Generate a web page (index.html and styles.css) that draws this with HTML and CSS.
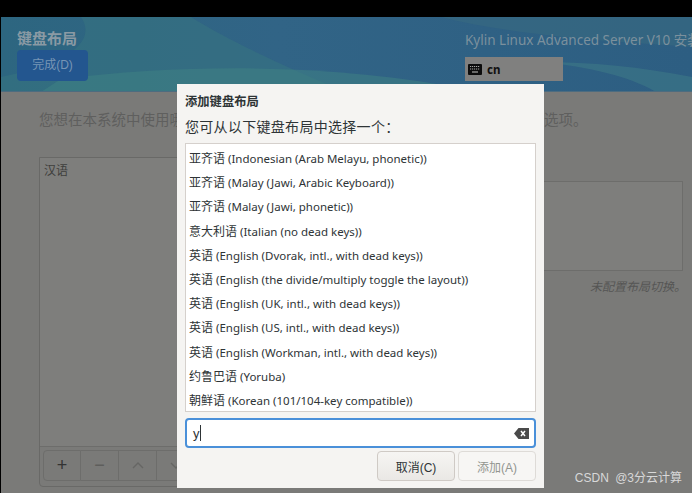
FILE: index.html
```html
<!DOCTYPE html>
<html>
  <head>
    <meta charset="utf-8">
    <link rel="stylesheet" href="styles.css">
  </head>
  <body>
    <div class="screen">
      <div class="topbar">
        <svg class="waves" width="691" height="75" viewBox="0 0 691 75" preserveAspectRatio="none">
          <defs>
            <linearGradient id="sky" x1="0" y1="0" x2="1" y2="0">
              <stop offset="0" stop-color="#2d6680"/>
              <stop offset=".4" stop-color="#316486"/>
              <stop offset="1" stop-color="#2d5e82"/>
            </linearGradient>
          </defs>
          <rect width="691" height="75" fill="url(#sky)"/>
          <path d="M80 0H190C230 25 285 50 345 75H0V60C50 50 100 30 80 0z" fill="#37757f" opacity=".5"/>
          <path d="M60 62C190 46 340 46 480 75H40z" fill="#3f8383" opacity=".5"/>
          <path d="M440 0H691V30C620 25 520 20 440 0z" fill="#3a6b80" opacity=".5"/>
          <path d="M540 45C590 50 630 60 655 75H691V60C640 50 590 45 540 45z" fill="#3f7d88" opacity=".5"/>
        </svg>
        <div class="topleft">
          <h1>键盘布局</h1>
          <span class="done">完成(D)</span>
        </div>
        <div class="topright">
          <div class="product">Kylin Linux Advanced Server V10 安装</div>
          <div class="layout-box">
            <svg class="kbd" width="14" height="11" viewBox="0 0 14 11"><rect width="14" height="11" rx="1" fill="#0c0c0c"/><path d="M2 2.5h10M2 5h10" stroke="#a8a8a6" stroke-width="1.2" stroke-dasharray="1.2 .8"/><path d="M4 8h6" stroke="#a8a8a6" stroke-width="1.2"/></svg>
            <b>cn</b>
          </div>
        </div>
      </div>
      <div class="content">
        <div class="question">
          <span class="q-start">您想在本系统中使用哪</span>
          <span class="q-end">选项。</span>
        </div>
        <div class="columns">
          <div class="left">
            <div class="langlist">汉语</div>
            <div class="tools">
              <span class="tool dark">+</span>
              <span class="tool">−</span>
              <span class="tool"><svg width="12" height="7" viewBox="0 0 12 7"><path d="M1 6l5-5 5 5" fill="none" stroke="#666664" stroke-width="1.4"/></svg></span>
              <span class="tool"><svg width="12" height="7" viewBox="0 0 12 7"><path d="M1 1l5 5 5-5" fill="none" stroke="#666664" stroke-width="1.4"/></svg></span>
            </div>
          </div>
          <div class="right">
            <div class="preview"></div>
            <div class="noswitch">未配置布局切换。</div>
          </div>
        </div>
      </div>
      <div class="watermark">CSDN @3分云计算</div>
    </div>

    <div class="dialog">
      <h2>添加键盘布局</h2>
      <div class="hint">您可从以下键盘布局中选择一个：</div>
      <ul class="options">
        <li><span class="zh">亚齐语</span> (Indonesian (Arab Melayu, phonetic))</li>
        <li><span class="zh">亚齐语</span> (Malay (Jawi, Arabic Keyboard))</li>
        <li><span class="zh">亚齐语</span> (Malay (Jawi, phonetic))</li>
        <li><span class="zh">意大利语</span> (Italian (no dead keys))</li>
        <li><span class="zh">英语</span> (English (Dvorak, intl., with dead keys))</li>
        <li><span class="zh">英语</span> (English (the divide/multiply toggle the layout))</li>
        <li><span class="zh">英语</span> (English (UK, intl., with dead keys))</li>
        <li><span class="zh">英语</span> (English (US, intl., with dead keys))</li>
        <li><span class="zh">英语</span> (English (Workman, intl., with dead keys))</li>
        <li><span class="zh">约鲁巴语</span> (Yoruba)</li>
        <li><span class="zh">朝鲜语</span> (Korean (101/104-key compatible))</li>
      </ul>
      <div class="search">
        <span class="typed">y</span><i class="caret"></i>
        <svg class="clear" width="15" height="11" viewBox="0 0 15 11"><path d="M0 5.5L4.5 0H15V11H4.5z" fill="#4a4a4a"/><path d="M7 3l4 5M11 3l-4 5" stroke="#fff" stroke-width="1.5"/></svg>
      </div>
      <div class="actions">
        <button class="btn">取消(C)</button>
        <button class="btn off">添加(A)</button>
      </div>
    </div>
  </body>
</html>
```

FILE: styles.css
```css
*{
  box-sizing:border-box;
}
html,body{
  margin:0;
  height:100%;
  overflow:hidden;
}
body{
  background-color:black;
  font-family:"Liberation Sans","Noto Sans CJK SC",sans-serif;
  padding-top:17px;
  padding-left:1px;
}
.screen{
  height:476px;
  background-color:#7a7a78;
  display:flex;
  flex-direction:column;
  position:relative;
}

/* top bar */
.topbar{
  height:75px;
  flex:none;
  display:flex;
  justify-content:space-between;
  padding:12px 0 0 16px;
  overflow:hidden;
  position:relative;
  isolation:isolate;
  border-bottom:1px solid #4d6c80;
}
.waves{
  position:absolute;
  left:0;
  top:0;
  z-index:-1;
}
.topleft h1{
  margin:0;
  font-size:15px;
  line-height:20px;
  font-weight:bold;
  color:#8a9aa4;
}
.done{
  display:block;
  width:71px;
  height:31px;
  margin-top:1px;
  background-color:#23568f;
  border-radius:4px;
  color:#7795b5;
  font-size:12px;
  line-height:30px;
  text-align:center;
}
.topright{
  width:227px;
  flex:none;
  overflow:hidden;
  padding-top:1px;
}
.product{
  white-space:nowrap;
  color:#7b909d;
  font-family:"Noto Sans","Noto Sans CJK SC",sans-serif;
  font-size:13.5px;
  line-height:20px;
}
.layout-box{
  width:98px;
  height:24px;
  margin-top:7px;
  background-color:#80807f;
  display:flex;
  align-items:center;
  padding-left:3px;
  gap:5px;
  font-family:"Noto Sans",sans-serif;
  font-size:11.5px;
  color:#111;
}
.kbd{
  flex:none;
}

/* dimmed page */
.content{
  flex:1;
  padding:17px 6px 0 38px;
  display:flex;
  flex-direction:column;
}
.question{
  display:flex;
  color:#5f5f5e;
  font-size:14.5px;
  line-height:22px;
  white-space:nowrap;
}
.q-start{
  width:138px;
  overflow:hidden;
}
.q-end{
  margin-left:367px;
}
.columns{
  display:flex;
  flex:1;
  margin-top:26px;
  justify-content:space-between;
}
.left{
  width:200px;
  height:330px;
  border:1px solid #696967;
  border-radius:0 0 4px 4px;
  display:flex;
  flex-direction:column;
}
.langlist{
  flex:1;
  padding:4px;
  font-size:12px;
  line-height:18px;
  color:#3e3e3d;
  background-color:#7e7e7c;
}
.tools{
  height:40px;
  flex:none;
  border-top:1px solid #6d6d6b;
  padding:3px;
  display:flex;
}
.tool{
  width:38px;
  height:31px;
  border:1px solid #6d6d6b;
  border-left-width:0;
  display:flex;
  align-items:center;
  justify-content:center;
  color:#5e5e5c;
  font-size:18px;
}
.tool:first-child{
  border-left-width:1px;
  border-radius:4px 0 0 4px;
}
.tool.dark{
  color:#333;
}
.right{
  width:142px;
  margin-top:24px;
}
.preview{
  height:90px;
  margin-right:3px;
  border:1px solid #6d6d6b;
  border-left:none;
  background-color:#7e7e7c;
}
.noswitch{
  margin-top:8px;
  color:#555554;
  font-size:12px;
  font-style:italic;
  text-align:right;
  line-height:16px;
}
.watermark{
  position:absolute;
  right:10px;
  bottom:7px;
  color:#d8d8d8;
  font-size:12px;
  line-height:16px;
  word-spacing:3px;
}

/* dialog */
.dialog{
  position:absolute;
  left:177px;
  top:84px;
  width:367px;
  height:404px;
  background-color:#f5f4f2;
  padding:9px 8px 0 8px;
  color:#2e3436;
}
.dialog h2{
  margin:0;
  font-size:12.3px;
  line-height:18px;
  font-weight:bold;
}
.hint{
  margin-top:6px;
  font-size:14px;
  line-height:20px;
  letter-spacing:.3px;
}
.options{
  list-style:none;
  margin:6px 0 0 0;
  padding:3px 0 0 0;
  height:269px;
  background-color:white;
  border:1px solid #d5d0cc;
}
.options li{
  height:24.2px;
  line-height:24px;
  padding-left:3px;
  font-family:"Noto Sans","Noto Sans CJK SC",sans-serif;
  font-size:11.5px;
  white-space:nowrap;
}
.zh{
  font-size:12px;
}
.search{
  height:30px;
  margin-top:6px;
  background-color:white;
  border:2px solid #4a90d9;
  border-radius:4px;
  display:flex;
  align-items:center;
  padding:0 5px 0 6px;
  font-size:13px;
}
.caret{
  width:1px;
  height:16px;
  background-color:#2e3436;
}
.clear{
  margin-left:auto;
}
.actions{
  display:flex;
  justify-content:flex-end;
  gap:3px;
  margin-top:3px;
}
.btn{
  width:78px;
  height:30px;
  padding:0;
  background:linear-gradient(#f6f5f3,#eae8e5);
  border:1px solid #cfcac5;
  border-radius:4px;
  color:#2e3436;
  font-family:"Liberation Sans","Noto Sans CJK SC",sans-serif;
  font-size:12px;
}
.btn.off{
  background:#f7f6f4;
  border-color:#dedbd7;
  color:#92958f;
}
```
